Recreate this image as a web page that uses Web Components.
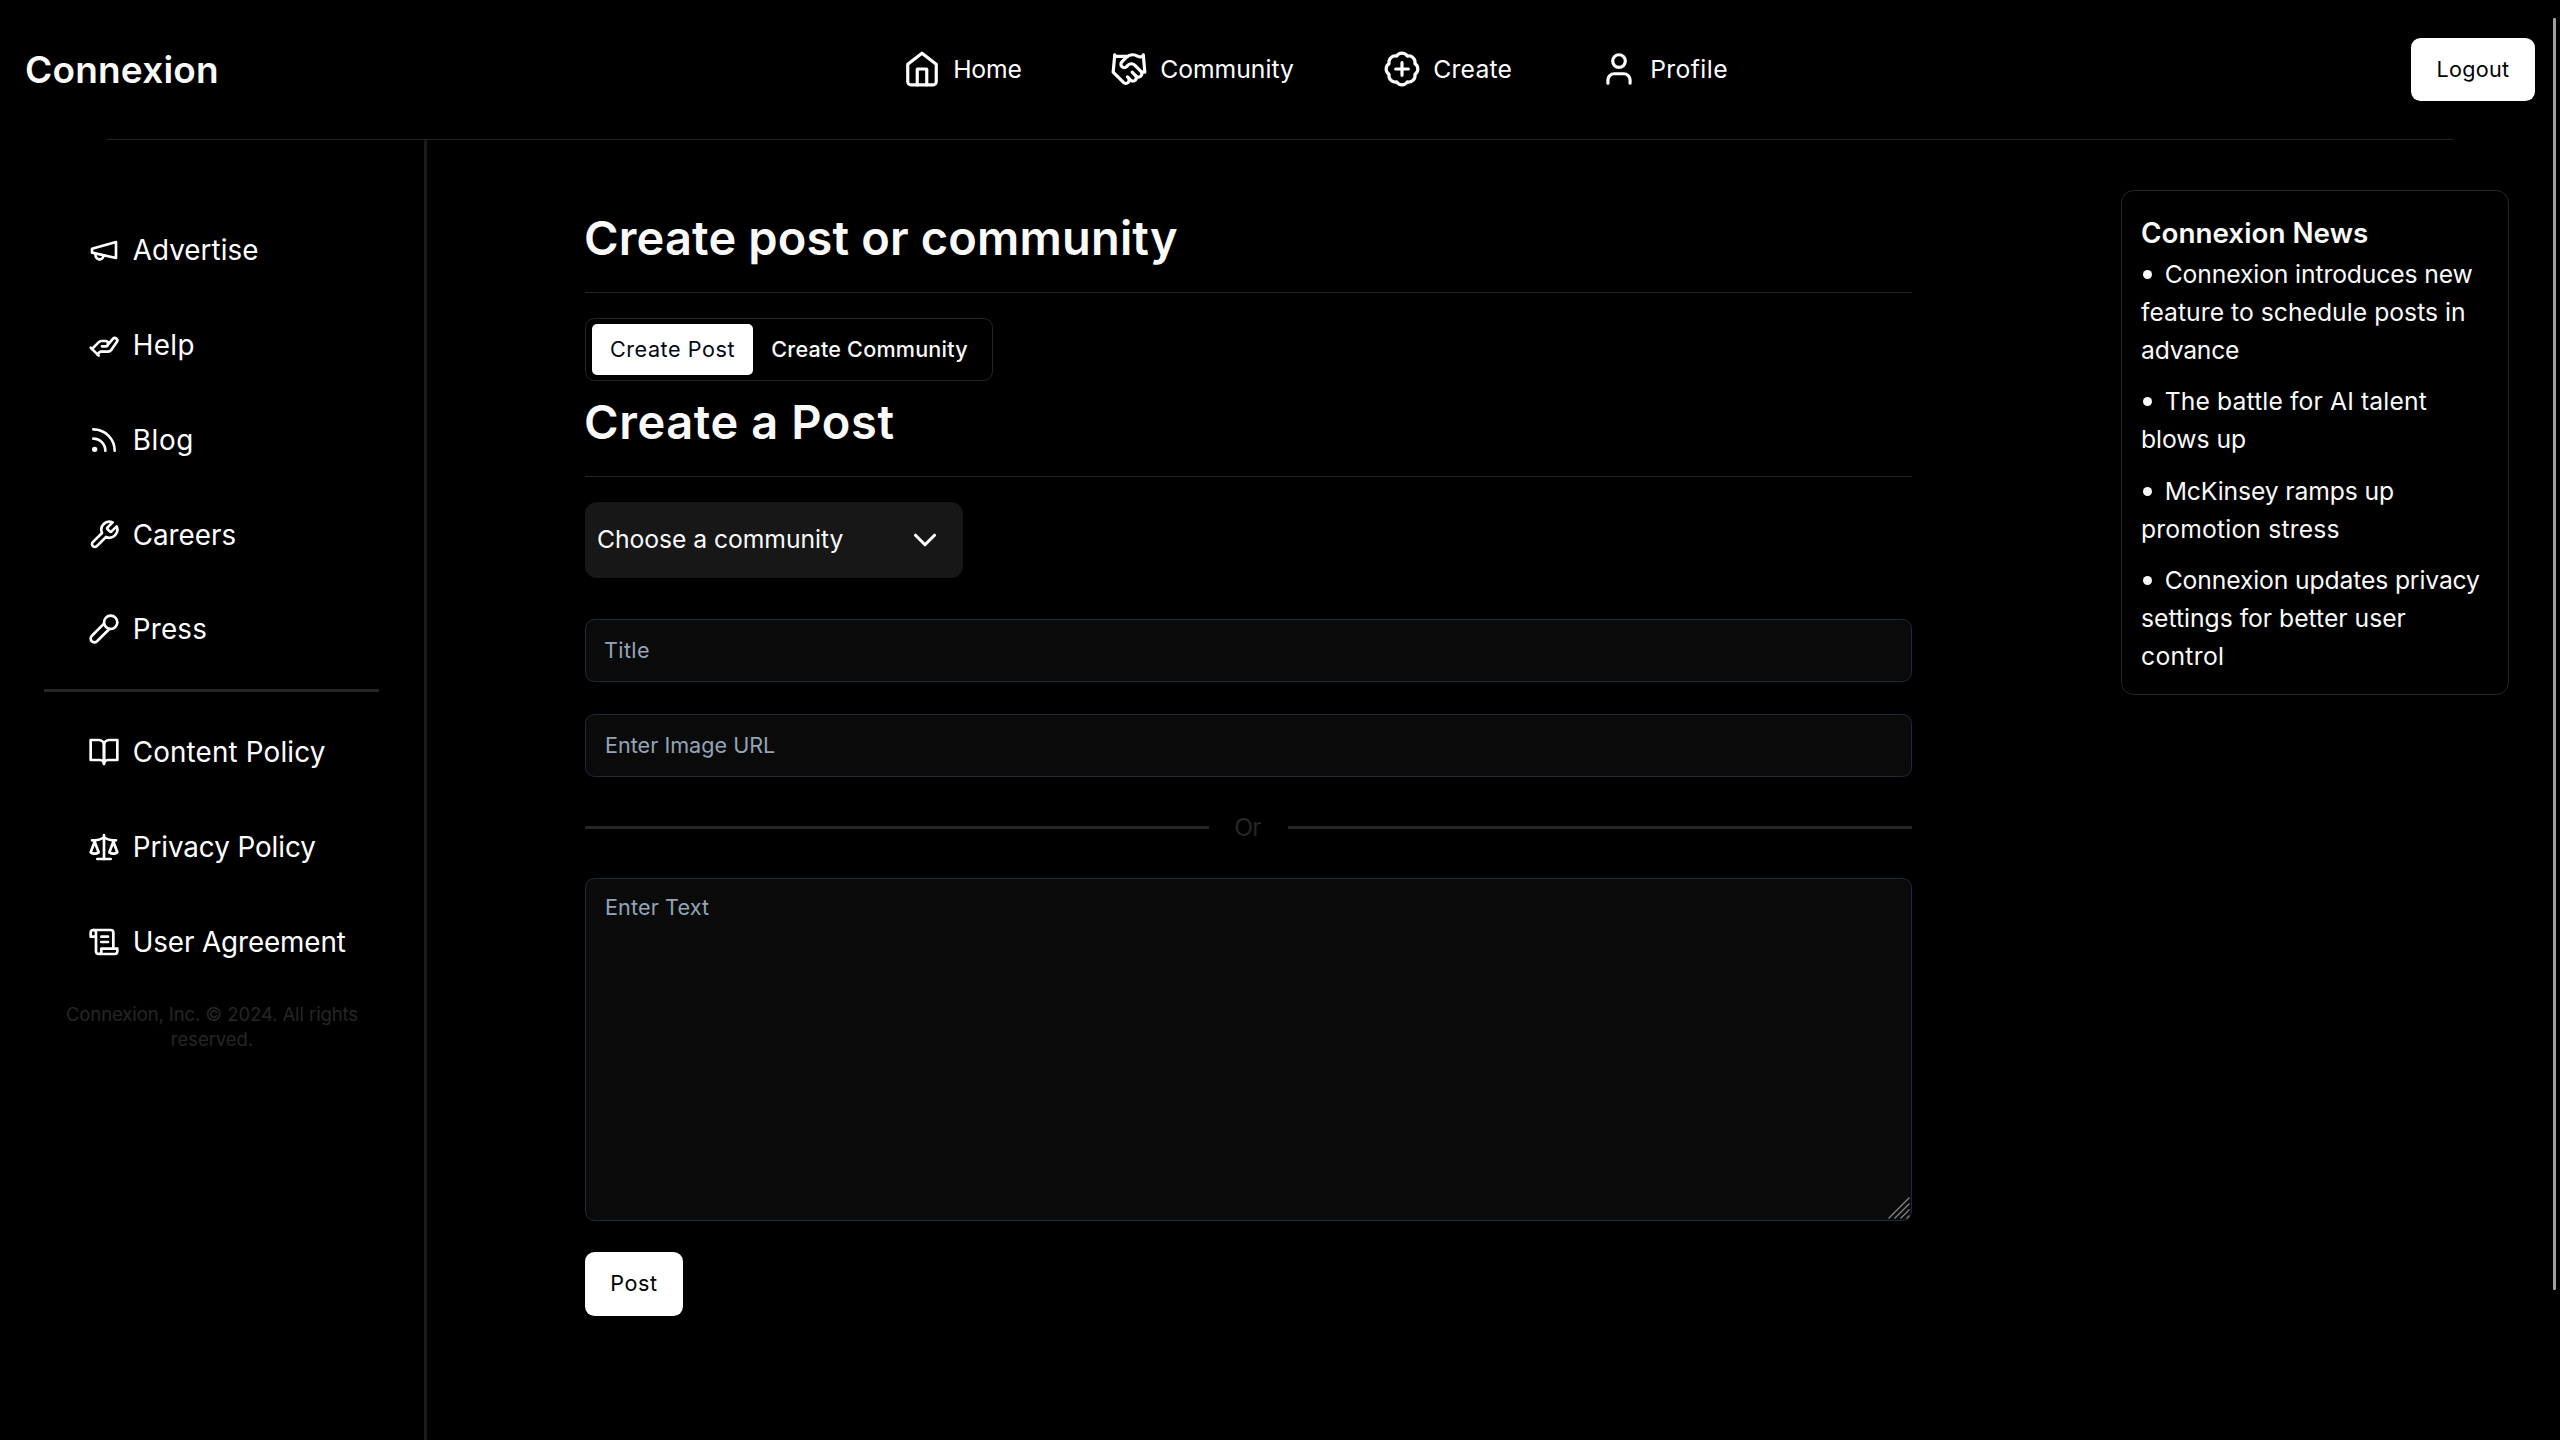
<!DOCTYPE html>
<html lang="en">
<head>
<meta charset="utf-8">
<title>Connexion</title>
<style>
html,body{margin:0;height:100%;background:#000;overflow:hidden}
body{font-family:Inter,"Liberation Sans",sans-serif;color:#fafaf9;font-size:24.7px;line-height:38px}
</style>
</head>
<body>
<connexion-app></connexion-app>
<script>
const define = (name, html, setup) => {
  const tpl = document.createElement('template');
  tpl.innerHTML = '<style>*{box-sizing:border-box}:host{box-sizing:border-box}</style>' + html;
  customElements.define(name, class extends HTMLElement {
    constructor() {
      super();
      this.attachShadow({ mode: 'open' }).append(tpl.content.cloneNode(true));
    }
    connectedCallback() { if (setup) setup(this, this.shadowRoot); }
  });
};

const ICONS = {
  home: '<path d="m3 9 9-7 9 7v11a2 2 0 0 1-2 2H5a2 2 0 0 1-2-2z"/><path d="M9 22V12h6v10"/>',
  handshake: '<path d="m11 17 2 2a1 1 0 1 0 3-3"/><path d="m14 14 2.5 2.5a1 1 0 1 0 3-3l-3.88-3.88a3 3 0 0 0-4.24 0l-.88.88a1 1 0 1 1-3-3l2.81-2.81a5.79 5.79 0 0 1 7.06-.87l.47.28a2 2 0 0 0 1.42.25L21 4"/><path d="m21 3 1 11h-2"/><path d="M3 3 2 14l6.5 6.5a1 1 0 1 0 3-3"/><path d="M3 4h8"/>',
  plus: '<path d="M3.85 8.62a4 4 0 0 1 4.78-4.77 4 4 0 0 1 6.74 0 4 4 0 0 1 4.78 4.78 4 4 0 0 1 0 6.74 4 4 0 0 1-4.77 4.78 4 4 0 0 1-6.75 0 4 4 0 0 1-4.78-4.77 4 4 0 0 1 0-6.76Z"/><path d="M12 8v8M8 12h8"/>',
  user: '<path d="M19 21v-2a4 4 0 0 0-4-4H9a4 4 0 0 0-4 4v2"/><circle cx="12" cy="7" r="4"/>',
  megaphone: '<path d="m3 11 18-5v12L3 14v-3z"/><path d="M11.6 16.8a3 3 0 1 1-5.8-1.6"/>',
  hand: '<path d="m3 15 5.12-5.12A3 3 0 0 1 10.24 9H13a2 2 0 1 1 0 4h-2.5m4-.68 4.17-4.89a1.88 1.88 0 0 1 2.92 2.36l-4.2 5.94A3 3 0 0 1 14.96 17H9.83a2 2 0 0 0-1.42.59L7 19"/><path d="m2 14 6 6"/>',
  rss: '<path d="M4 11a9 9 0 0 1 9 9"/><path d="M4 4a16 16 0 0 1 16 16"/><circle cx="5" cy="19" r="1"/>',
  wrench: '<path d="M14.7 6.3a1 1 0 0 0 0 1.4l1.6 1.6a1 1 0 0 0 1.4 0l3.77-3.77a6 6 0 0 1-7.94 7.94l-6.91 6.91a2.12 2.12 0 0 1-3-3l6.91-6.91a6 6 0 0 1 7.94-7.94l-3.76 3.76z"/>',
  mic: '<path d="m12 8-9.04 9.06a2.82 2.82 0 1 0 3.98 3.98L16 12"/><circle cx="17" cy="7" r="5"/>',
  book: '<path d="M2 3h6a4 4 0 0 1 4 4v14a3 3 0 0 0-3-3H2z"/><path d="M22 3h-6a4 4 0 0 0-4 4v14a3 3 0 0 1 3-3h7z"/>',
  scale: '<path d="m16 16 3-8 3 8c-.87.65-1.92 1-3 1s-2.13-.35-3-1Z"/><path d="m2 16 3-8 3 8c-.87.65-1.92 1-3 1s-2.13-.35-3-1Z"/><path d="M7 21h10"/><path d="M12 3v18"/><path d="M3 7h2c2 0 5-1 7-2 2 1 5 2 7 2h2"/>',
  scroll: '<path d="M8 21h12a2 2 0 0 0 2-2v-2H10v2a2 2 0 1 1-4 0V5a2 2 0 1 0-4 0v3h4"/><path d="M19 17V5a2 2 0 0 0-2-2H4"/><path d="M15 8h-5M15 12h-5"/>',
  chevron: '<path d="m6 9 6 6 6-6"/>'
};

define('ui-icon', `<style>:host{display:block;flex:none;width:38px;height:38px}svg{display:block;width:100%;height:100%}</style>
<svg viewBox="0 0 24 24" fill="none" stroke="currentColor" stroke-width="2" stroke-linecap="round" stroke-linejoin="round"></svg>`,
  (el, root) => { root.querySelector('svg').innerHTML = ICONS[el.getAttribute('name')]; });

// One line of text; the "track" attribute is its letter spacing in pixels.
define('ui-text', `<style>:host{display:block;white-space:nowrap}</style><slot></slot>`,
  el => { if (el.hasAttribute('track')) el.style.letterSpacing = el.getAttribute('track') + 'px'; });

define('ui-separator', `<style>:host{display:block;height:1px;background:#262626}</style>`);

define('ui-button', `<style>:host{display:flex;flex:none}
button{all:unset;box-sizing:border-box;flex:1;display:flex;justify-content:center;align-items:center;background:#fff;color:#020202;border-radius:9.5px;font-size:21.6px;line-height:32px;font-weight:400;padding-bottom:1px}</style>
<button><slot></slot></button>`);

define('nav-link', `<style>:host{display:flex;align-items:center;gap:12.2px;color:#fff}
::slotted(ui-text){margin-bottom:1.4px}</style><slot name="icon"></slot><slot></slot>`);

define('app-header', `<style>
:host{display:block;flex:none}
.bar{height:139px;display:flex;justify-content:space-between;align-items:center;padding:0 25px}
.brand{font-size:37px;font-weight:600;line-height:50px}
nav{display:flex}
nav-link:nth-child(1){width:207px}nav-link:nth-child(2){width:273px}nav-link:nth-child(3){width:217px}nav-link:nth-child(4){width:127px}
ui-button{width:124px;height:63px}
ui-separator{margin:0 107px}
</style>
<header class="bar">
 <ui-text class="brand" track=".2">Connexion</ui-text>
 <nav>
  <nav-link><ui-icon slot="icon" name="home"></ui-icon><ui-text track="-.16">Home</ui-text></nav-link>
  <nav-link><ui-icon slot="icon" name="handshake"></ui-icon><ui-text track="0">Community</ui-text></nav-link>
  <nav-link><ui-icon slot="icon" name="plus"></ui-icon><ui-text track=".25">Create</ui-text></nav-link>
  <nav-link><ui-icon slot="icon" name="user"></ui-icon><ui-text track=".41">Profile</ui-text></nav-link>
 </nav>
 <ui-button><ui-text track=".27">Logout</ui-text></ui-button>
</header>
<ui-separator></ui-separator>`);

define('side-link', `<style>:host{display:flex;align-items:center;height:94.75px;padding:0 0 1px 88px;gap:12.7px;color:#fff;font-size:27.8px;line-height:44px}
::slotted(ui-icon){width:32px;height:32px}</style><slot name="icon"></slot><slot></slot>`);

define('app-sidebar', `<style>
:host{display:flex;flex-direction:column;flex:none;width:427px;border-right:3px solid #1b1b1e;padding-top:63.4px}
ui-separator{height:3px;margin:11.85px 45px 13.2px 44px}
.copy{font-size:18.5px;line-height:25px;color:#262626;display:flex;flex-direction:column;align-items:center;margin-top:12.6px}
</style>
<side-link><ui-icon slot="icon" name="megaphone"></ui-icon><ui-text track=".06">Advertise</ui-text></side-link>
<side-link><ui-icon slot="icon" name="hand"></ui-icon><ui-text track=".4">Help</ui-text></side-link>
<side-link><ui-icon slot="icon" name="rss"></ui-icon><ui-text track=".7">Blog</ui-text></side-link>
<side-link><ui-icon slot="icon" name="wrench"></ui-icon><ui-text track="0">Careers</ui-text></side-link>
<side-link><ui-icon slot="icon" name="mic"></ui-icon><ui-text track=".22">Press</ui-text></side-link>
<ui-separator></ui-separator>
<side-link><ui-icon slot="icon" name="book"></ui-icon><ui-text track=".17">Content Policy</ui-text></side-link>
<side-link><ui-icon slot="icon" name="scale"></ui-icon><ui-text track="-.06">Privacy Policy</ui-text></side-link>
<side-link><ui-icon slot="icon" name="scroll"></ui-icon><ui-text track="-.11">User Agreement</ui-text></side-link>
<div class="copy"><ui-text track="-.1">Connexion, Inc. © 2024. All rights</ui-text><ui-text track="-.05">reserved.</ui-text></div>`);

define('page-title', `<style>:host{display:block;font-size:47px;line-height:55px;font-weight:600}
::slotted(ui-text){margin-left:-1px}
ui-separator{margin-top:27px}</style><slot></slot><ui-separator></ui-separator>`);

define('ui-tabs', `<style>:host{display:flex;width:408px;height:63px;border:1px solid #262626;border-radius:9.5px;padding:5px 6px;font-size:21.6px;line-height:32px;font-weight:500}
div{display:flex;align-items:center;justify-content:center;border-radius:5px;padding-bottom:1.5px}
.on{background:#fff;color:#020617;width:161px;font-weight:400}.off{flex:1;padding-right:0}</style>
<div class="on"><ui-text track=".54">Create Post</ui-text></div><div class="off"><ui-text track=".2">Create Community</ui-text></div>`);

define('ui-select', `<style>:host{display:flex;align-items:center;justify-content:space-between;width:378px;height:76px;background:#171717;border-radius:12px;padding:0 19px 0 12px;color:#fafafa}
::slotted(ui-text){margin-bottom:2px}</style>
<slot></slot><ui-icon name="chevron"></ui-icon>`);

define('ui-field', `<style>:host{display:block;height:63px;background:#0a0a0a;border:1px solid #1e293b;border-radius:9.5px;padding:14px 19px;color:#94a3b8;font-size:21.6px;line-height:32px;position:relative}
:host([multiline]){height:343px;padding-top:12px}
svg{display:none;position:absolute;right:1px;bottom:1px;width:22px;height:22px}:host([multiline]) svg{display:block}</style>
<slot></slot><svg viewBox="0 0 22 22" fill="none" stroke="#8b8b8b" stroke-width="1.1"><path d="M.5 21.5l21-21M6.5 21.5l15-15M12.5 21.5l9-9M18.5 21.5l3-3"/></svg>`);

define('or-divider', `<style>:host{display:flex;align-items:center;height:37px;line-height:37px;color:#262626}
ui-separator{flex:1;height:3px}ui-text{width:79px;text-align:center;padding-right:2px}</style>
<ui-separator></ui-separator><ui-text track="-.8">Or</ui-text><ui-separator></ui-separator>`);

define('create-form', `<style>
:host{display:flex;flex-direction:column;width:1327px;flex:none;margin-left:158px;padding-top:70px}
ui-tabs{margin:25px 0 13px}
ui-select{margin:25px 0 41px}
ui-field{margin-bottom:32px}
or-divider{margin:0 0 32px}
.area{margin-bottom:31px}
ui-button{width:98px;height:64px}
.post{margin-bottom:1px}
</style>
<page-title><ui-text track=".15">Create post or community</ui-text></page-title>
<ui-tabs></ui-tabs>
<page-title><ui-text track=".58">Create a Post</ui-text></page-title>
<ui-select><ui-text track="-.05">Choose a community</ui-text></ui-select>
<ui-field><ui-text style="margin-left:-1px" track=".38">Title</ui-text></ui-field>
<ui-field><ui-text track="0">Enter Image URL</ui-text></ui-field>
<or-divider></or-divider>
<ui-field class="area" multiline><ui-text track=".12">Enter Text</ui-text></ui-field>
<ui-button><ui-text class="post" track=".55">Post</ui-text></ui-button>`);

define('news-item', `<style>:host{display:block;padding-bottom:13.33px}
:host::before{content:"";float:left;width:9px;height:9px;border-radius:50%;background:#fafaf9;margin:15px 12.7px 0 2px}</style><slot></slot>`);

define('news-card', `<style>
:host{display:block;width:388px;height:505px;border:1px solid #262626;border-radius:12.7px;padding:20px 19px}
h2{margin:0;font-size:27.8px;line-height:44px;font-weight:600}
</style>
<h2><ui-text track=".02">Connexion News</ui-text></h2>
<news-item><ui-text track="-.12">Connexion introduces new</ui-text><ui-text track=".03">feature to schedule posts in</ui-text><ui-text track="-.23">advance</ui-text></news-item>
<news-item><ui-text track=".13">The battle for AI talent</ui-text><ui-text track="-.03">blows up</ui-text></news-item>
<news-item><ui-text track="-.12">McKinsey ramps up</ui-text><ui-text track=".16">promotion stress</ui-text></news-item>
<news-item><ui-text track="-.13">Connexion updates privacy</ui-text><ui-text track="0">settings for better user</ui-text><ui-text track=".29">control</ui-text></news-item>`);

define('connexion-app', `<style>
:host{display:flex;flex-direction:column;height:1440px;width:2560px;position:relative}
.body{display:flex;flex:1;min-height:0}
news-card{margin:50px 51px 0 auto}
.thumb{position:absolute;left:2553px;top:18px;width:3px;height:1272px;background:#9f9f9f;border-radius:1px}
</style>
<app-header></app-header>
<div class="body"><app-sidebar></app-sidebar><create-form></create-form><news-card></news-card></div>
<div class="thumb"></div>`);
</script>
</body>
</html>
